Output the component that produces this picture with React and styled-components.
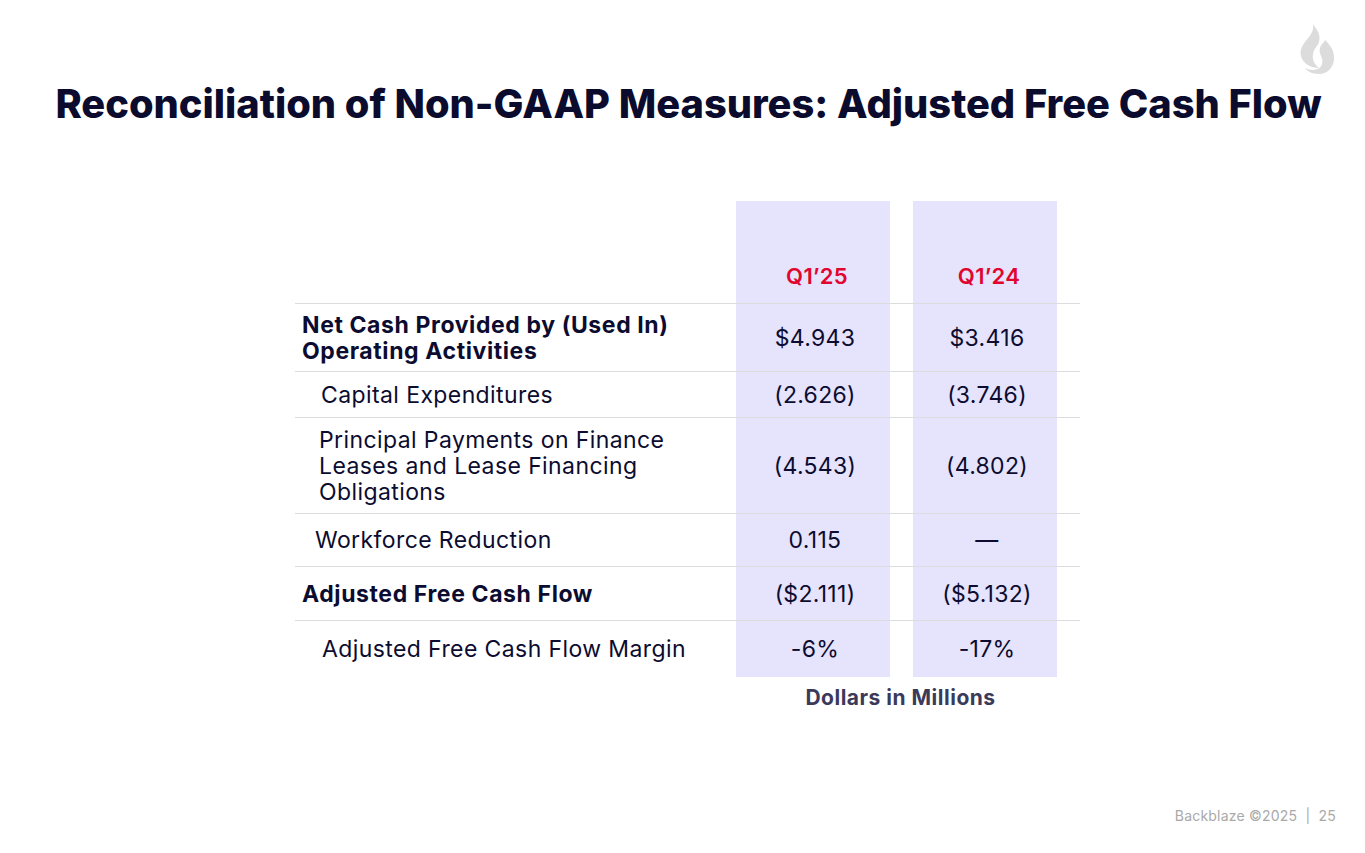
import React from 'react';
import styled, { createGlobalStyle } from 'styled-components';

const GlobalStyle = createGlobalStyle`
  html, body {
    margin: 0;
    padding: 0;
    background: #ffffff;
  }
  body {
    font-family: Inter, "Noto Sans", sans-serif;
    color: #0c0c30;
  }
`;

const Slide = styled.div`
  width: 1365px;
  height: 853px;
  position: relative;
  overflow: hidden;
  background: #ffffff;
  display: flex;
  flex-direction: column;
`;

const Header = styled.header`
  display: flex;
  justify-content: center;
  padding-top: 80px;
  padding-left: 12px;
`;

const Title = styled.h1`
  margin: 0;
  font-family: Inter, sans-serif;
  font-weight: 800;
  font-size: 39.8px;
  line-height: 48px;
  color: #0b0b2e;
  white-space: nowrap;
`;

const Logo = styled.div`
  position: absolute;
  top: 24px;
  right: 30px;
  width: 36px;
  height: 52px;
`;

const TableWrap = styled.div`
  display: flex;
  flex-direction: column;
  margin-top: 73px;
  margin-left: 295px;
  width: 785px;
`;

const Row = styled.div`
  display: grid;
  grid-template-columns: 441px 154px 23px 144px 23px;
  height: ${(p) => p.$h}px;
  border-top: ${(p) => (p.$top ? '1px solid #dcdcdc' : 'none')};
  box-sizing: border-box;
`;

const Label = styled.div`
  display: flex;
  align-items: center;
  padding-left: ${(p) => p.$indent}px;
  font-size: 23px;
  line-height: 26px;
  letter-spacing: ${(p) => (p.$bold ? '0.6px' : '0.4px')};
  font-weight: ${(p) => (p.$bold ? 700 : 400)};
  color: #0c0c30;
`;

const Value = styled.div`
  display: flex;
  align-items: ${(p) => (p.$head ? 'flex-end' : 'center')};
  justify-content: center;
  padding-bottom: ${(p) => (p.$head ? '14px' : '0')};
  padding-left: ${(p) => (p.$head ? '8px' : '4px')};
  box-sizing: border-box;
  background: #e6e3fc;
  font-size: ${(p) => (p.$head ? '22px' : '23px')};
  letter-spacing: 0.3px;
  font-weight: ${(p) => (p.$head ? 600 : 400)};
  color: ${(p) => (p.$head ? '#e0062f' : '#0c0c30')};
`;

const Gap = styled.div``;

const Note = styled.div`
  display: grid;
  grid-template-columns: 441px 321px;
  padding-top: 8px;
`;

const NoteText = styled.div`
  text-align: center;
  padding-left: 8px;
  font-size: 21px;
  letter-spacing: 0.5px;
  font-weight: 700;
  color: #3b3a5a;
`;

const Footer = styled.div`
  position: absolute;
  right: 29px;
  bottom: 29px;
  font-size: 14px;
  color: #a9a9a9;
  letter-spacing: 0.2px;
`;

const rows = [
  { label: ['Net Cash Provided by (Used In)', 'Operating Activities'], bold: true, indent: 7, h: 68, a: '$4.943', b: '$3.416' },
  { label: ['Capital Expenditures'], indent: 26, h: 46, a: '(2.626)', b: '(3.746)' },
  { label: ['Principal Payments on Finance', 'Leases and Lease Financing', 'Obligations'], indent: 24, h: 96, a: '(4.543)', b: '(4.802)' },
  { label: ['Workforce Reduction'], indent: 20, h: 53, a: '0.115', b: '—' },
  { label: ['Adjusted Free Cash Flow'], bold: true, indent: 7, h: 54, a: '($2.111)', b: '($5.132)' },
  { label: ['Adjusted Free Cash Flow Margin'], indent: 27, h: 57, a: '-6%', b: '-17%' },
];

function Flame() {
  return (
    <svg width="36" height="52" viewBox="0 0 36 52">
      <path
        d="M14 0 C 18 6, 22 10, 20 18 C 19 22, 15 24, 14 30 C 13 35, 15 40, 20 44 C 12 44, 4 40, 2 32 C 0 24, 6 18, 10 13 C 13 9, 15 5, 14 0 Z"
        fill="#dcdcdc"
      />
      <path
        d="M26 16 C 30 20, 36 26, 35 36 C 34 44, 28 50, 20 50 C 13 50, 8 47, 6 44 C 12 47, 21 47, 23 40 C 25 34, 19 30, 21 24 C 22 20, 25 19, 26 16 Z"
        fill="#dcdcdc"
      />
    </svg>
  );
}

export default function App() {
  return (
    <>
      <GlobalStyle />
      <Slide>
        <Logo>
          <Flame />
        </Logo>
        <Header>
          <Title>Reconciliation of Non-GAAP Measures: Adjusted Free Cash Flow</Title>
        </Header>
        <TableWrap>
          <Row $h={102}>
            <Label />
            <Value $head>Q1’25</Value>
            <Gap />
            <Value $head>Q1’24</Value>
            <Gap />
          </Row>
          {rows.map((r, i) => (
            <Row key={i} $h={r.h} $top>
              <Label $bold={r.bold} $indent={r.indent}>
                <div>
                  {r.label.map((l, j) => (
                    <div key={j}>{l}</div>
                  ))}
                </div>
              </Label>
              <Value>{r.a}</Value>
              <Gap />
              <Value>{r.b}</Value>
              <Gap />
            </Row>
          ))}
          <Note>
            <div />
            <NoteText>Dollars in Millions</NoteText>
          </Note>
        </TableWrap>
        <Footer>Backblaze ©2025&nbsp;&nbsp;|&nbsp;&nbsp;25</Footer>
      </Slide>
    </>
  );
}
